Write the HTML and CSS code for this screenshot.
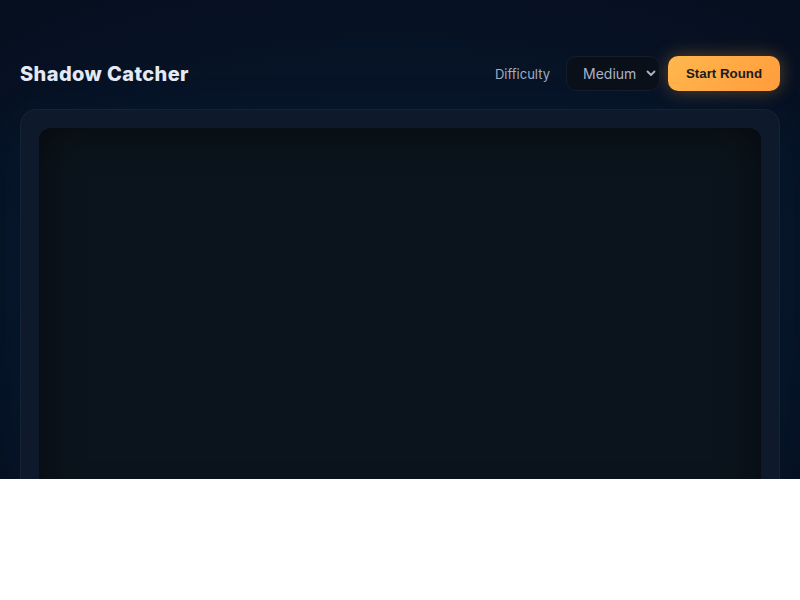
FILE: index.html
```html
<!DOCTYPE html>
<html lang="en">
<head>
<meta charset="utf-8">
<title>Shadow Catcher</title>
<link rel="stylesheet" href="styles.css">
</head>
<body>
<div class="app">
  <header class="topbar">
    <h1 class="title">Shadow Catcher</h1>
    <div class="controls">
      <label class="label" for="difficulty">Difficulty</label>
      <div class="select-wrap">
        <select id="difficulty" class="select">
          <option>Easy</option>
          <option selected>Medium</option>
          <option>Hard</option>
        </select>
        <svg class="chev" width="10" height="7" viewBox="0 0 10 7"><path d="M1.5 1.5 L5 5 L8.5 1.5" fill="none" stroke="#aab4c8" stroke-width="1.8" stroke-linecap="round" stroke-linejoin="round"/></svg>
      </div>
      <button class="start">Start Round</button>
    </div>
  </header>
  <main class="card">
    <div class="stage"></div>
  </main>
</div>
</body>
</html>
```
FILE: styles.css
```css
html, body {
  margin: 0;
  padding: 0;
  background: #ffffff;
}
.app {
  height: 479px;
  overflow: hidden;
  box-sizing: border-box;
  padding: 56px 20px 0;
  background: radial-gradient(ellipse 75% 65% at 50% 55%, #071629 0%, #071427 60%, #060f20 100%);
  font-family: Inter, "Noto Sans", sans-serif;
}
.topbar {
  display: flex;
  align-items: center;
  justify-content: space-between;
  height: 35px;
}
.title {
  margin: 0;
  font-size: 20px;
  font-weight: 800;
  color: #e3eaf6;
  letter-spacing: 0.4px;
}
.controls {
  display: flex;
  align-items: center;
}
.label {
  font-size: 13px;
  color: #a2adc0;
  margin-right: 16px;
}
.select-wrap {
  position: relative;
  margin-right: 8px;
}
.select {
  appearance: none;
  -webkit-appearance: none;
  width: 94px;
  height: 35px;
  box-sizing: border-box;
  padding: 0 0 0 16px;
  border: 1px solid #151d2a;
  border-radius: 10px;
  background: #0a101a;
  color: #a9b3c6;
  font-family: Inter, "Noto Sans", sans-serif;
  font-size: 14px;
}
.chev {
  position: absolute;
  right: 4px;
  top: 14px;
  pointer-events: none;
}
.start {
  width: 112px;
  height: 35px;
  border: none;
  border-radius: 10px;
  background: linear-gradient(135deg, #ffb84e 0%, #ffa743 60%, #ff9c3b 100%);
  color: #1a1b22;
  font-family: "Liberation Sans", Arial, sans-serif;
  font-weight: 700;
  font-size: 13.3px;
  box-shadow: 0 0 18px rgba(255, 165, 60, 0.35);
}
.card {
  display: block;
  margin-top: 18px;
  height: 420px;
  box-sizing: border-box;
  padding: 18px;
  border: 1px solid rgba(255, 255, 255, 0.04);
  border-radius: 16px;
  background: #0e1a2b;
  box-shadow: 0 10px 50px rgba(10, 60, 120, 0.12);
}
.stage {
  height: 100%;
  border-radius: 12px;
  background: #0b141c;
  box-shadow: inset 0 0 40px rgba(0, 0, 0, 0.55);
}
```
